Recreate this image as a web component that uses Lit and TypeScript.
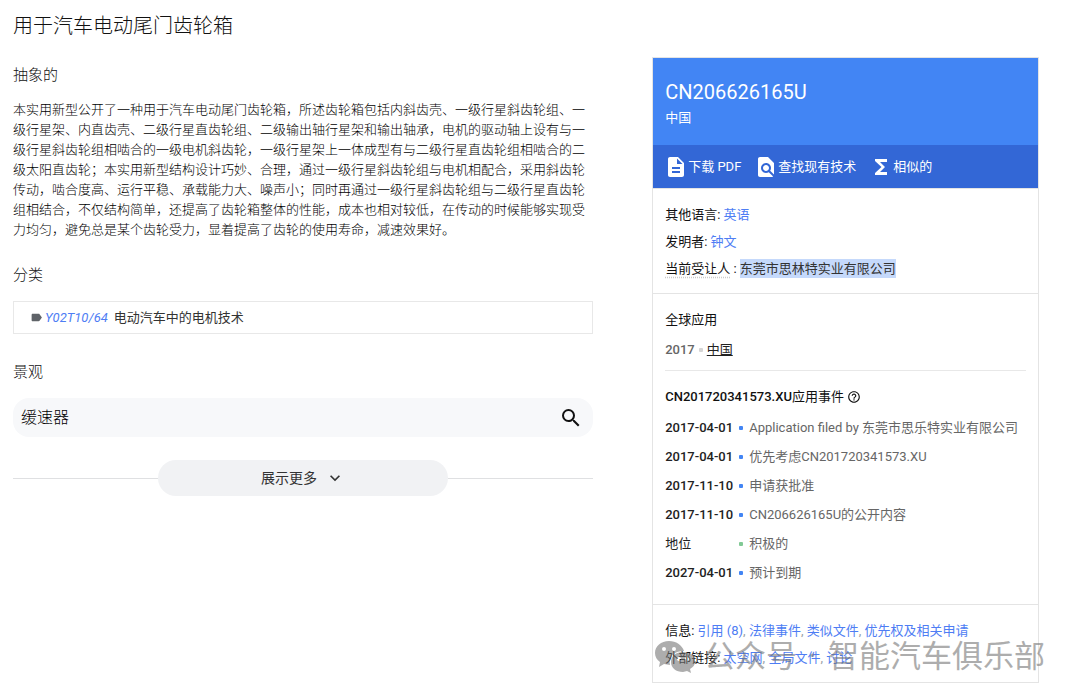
import { LitElement, html, css, svg } from "lit";
import { customElement, property } from "lit/decorators.js";

interface TimelineEvent {
  date: string;
  text: string;
  status?: boolean;
}

const EVENTS: TimelineEvent[] = [
  { date: "2017-04-01", text: "Application filed by 东莞市思乐特实业有限公司" },
  { date: "2017-04-01", text: "优先考虑CN201720341573.XU" },
  { date: "2017-11-10", text: "申请获批准" },
  { date: "2017-11-10", text: "CN206626165U的公开内容" },
  { date: "地位", text: "积极的", status: true },
  { date: "2027-04-01", text: "预计到期" },
];

const INFO_LINKS = ["引用 (8)", "法律事件", "类似文件", "优先权及相关申请"];
const EXTERNAL_LINKS = ["太空网", "全局文件", "讨论"];

const ICONS: Record<string, ReturnType<typeof svg>> = {
  document: svg`<path d="M14 2H6c-1.100 0-1.990.9-1.990 2L4 20c0 1.100.89 2 1.990 2H18c1.100 0 2-.9 2-2V8l-6-6zm2 16H8v-2h8v2zm0-4H8v-2h8v2zm-3-5V3.500L18.500 9H13z"/>`,
  find: svg`<path d="M20 19.590V8l-6-6H6c-1.100 0-1.990.9-1.990 2L4 20c0 1.100.89 2 1.990 2H18c.45 0 .85-.15 1.190-.4l-4.430-4.430c-.8.520-1.740.830-2.760.830-2.760 0-5-2.240-5-5s2.240-5 5-5 5 2.240 5 5c0 1.020-.31 1.960-.83 2.750L20 19.590zM9 13c0 1.660 1.340 3 3 3s3-1.340 3-3-1.340-3-3-3-3 1.340-3 3z"/>`,
  sigma: svg`<path d="M18 4H6v2l6.500 6L6 18v2h12v-3h-7l5-5-5-5h7z"/>`,
  search: svg`<path d="M15.500 14h-.79l-.28-.27A6.471 6.471 0 0 0 16 9.500 6.500 6.500 0 1 0 9.500 16c1.610 0 3.090-.59 4.230-1.570l.27.28v.79l5 4.990L20.490 19l-4.990-5zm-6 0C7.010 14 5 11.990 5 9.500S7.010 5 9.500 5 14 7.010 14 9.500 11.990 14 9.500 14z"/>`,
  chevron: svg`<path d="M16.590 8.590L12 13.170 7.410 8.590 6 10l6 6 6-6z"/>`,
  label: svg`<path d="M17.630 5.840C17.270 5.330 16.670 5 16 5L5 5.010C3.900 5.010 3 5.900 3 7v10c0 1.100.9 1.990 2 1.990L16 19c.67 0 1.270-.33 1.630-.84L22 12l-4.370-6.160z"/>`,
  help: svg`<path d="M11 18h2v-2h-2v2zm1-16C6.480 2 2 6.480 2 12s4.480 10 10 10 10-4.480 10-10S17.520 2 12 2zm0 18c-4.410 0-8-3.590-8-8s3.590-8 8-8 8 3.590 8 8-3.590 8-8 8zm0-14c-2.210 0-4 1.790-4 4h2c0-1.100.9-2 2-2s2 .9 2 2c0 2-3 1.750-3 5h2c0-2.250 3-2.500 3-5 0-2.210-1.790-4-4-4z"/>`,
};

@customElement("patent-icon")
class PatentIcon extends LitElement {
  @property() name = "";

  static styles = css`
    :host {
      display: inline-flex;
      flex: none;
      width: 24px;
      height: 24px;
    }
    svg {
      width: 100%;
      height: 100%;
      fill: currentColor;
    }
  `;

  render() {
    return html`<svg viewBox="0 0 24 24" aria-hidden="true">${ICONS[this.name]}</svg>`;
  }
}

@customElement("app-root")
class AppRoot extends LitElement {
  static styles = css`
    :host {
      display: block;
      color: #333;
      font: 13px/20px Roboto, "Noto Sans CJK SC", sans-serif;
    }
    * {
      box-sizing: border-box;
    }
    h1, h2, h3, p, ul {
      margin: 0;
      padding: 0;
      font-size: 13px;
      font-weight: 400;
    }
    a {
      color: #4e7df4;
      text-decoration: none;
    }
    .page {
      display: grid;
      grid-template-columns: minmax(0, 3fr) minmax(0, 2fr);
      column-gap: 59px;
      padding: 11px 41px 16px 13px;
      align-items: start;
    }
    .title {
      grid-column: 1 / -1;
      color: #111;
      font-size: 20px;
      font-weight: 300;
      line-height: 30px;
    }
    .main {
      padding-top: 23px;
    }
    .heading {
      color: #111;
      font-size: 15px;
      font-weight: 300;
      line-height: 22px;
    }
    .abstract {
      margin: 14px 0 24px;
      font-weight: 300;
      color: #000;
    }
    .classes {
      display: flex;
      align-items: center;
      height: 33px;
      margin: 15px 0 27px;
      padding: 0 16px;
      border: 1px solid #e8e8e8;
    }
    .tag {
      width: 13px;
      height: 13px;
      margin-right: 2px;
      color: #5f6368;
    }
    .code {
      margin-right: 6px;
      font-style: italic;
    }
    .search {
      display: flex;
      align-items: center;
      height: 39px;
      margin: 15px 0 23px;
      padding: 0 10px 0 8px;
      border-radius: 16px;
      background: #f7f8fa;
    }
    .field {
      flex: 1;
      min-width: 0;
      padding: 0;
      border: 0;
      outline: 0;
      background: none;
      color: #000;
      font: 300 16px/24px Roboto, "Noto Sans CJK SC", sans-serif;
    }
    .plain {
      display: flex;
      padding: 0;
      border: 0;
      background: none;
      color: #111;
    }
    .more {
      display: flex;
      align-items: center;
    }
    .more::before,
    .more::after {
      content: "";
      flex: 1;
      height: 1px;
      background: #dfe0e2;
    }
    .expand {
      display: flex;
      align-items: center;
      justify-content: center;
      gap: 8px;
      width: 50%;
      height: 36px;
      border: 0;
      border-radius: 18px;
      background: #f1f2f4;
      color: #333;
      font: 14px/20px Roboto, "Noto Sans CJK SC", sans-serif;
    }
    .small {
      width: 20px;
      height: 20px;
    }
    .side {
      position: relative;
      margin-top: 16px;
      border: 1px solid #e4e4e4;
    }
    .hero {
      padding: 21px 12px 17px;
      background: #4285f4;
      color: #fff;
    }
    .number {
      margin-bottom: 3px;
      font-size: 20px;
      line-height: 26px;
    }
    .bar {
      display: flex;
      align-items: center;
      gap: 13px;
      height: 43px;
      padding: 0 11px;
      background: #3367d6;
    }
    .action {
      display: flex;
      align-items: center;
      color: #fff;
    }
    .section {
      padding: 12px 12px 11px;
      border-top: 1px solid #e4e4e4;
      color: #111;
    }
    .timeline {
      padding: 16px 12px 17px;
    }
    .row {
      line-height: 27px;
    }
    .selected {
      padding: 2px 0;
      background: #c5d9fb;
      color: #333;
    }
    .hint {
      text-decoration: underline dotted #ccc;
      text-underline-offset: 4px;
    }
    .muted {
      color: #9aa0a6;
    }
    .year {
      display: flex;
      align-items: center;
      gap: 4px;
      margin-top: 10px;
      padding-bottom: 10px;
      border-bottom: 1px solid #e8e8e8;
      color: #666;
      font-weight: 500;
    }
    .dot {
      flex: none;
      width: 4px;
      height: 4px;
      border-radius: 1px;
      background: #d5d5d5;
    }
    .country {
      color: #222;
      font-weight: 400;
      text-decoration: underline;
    }
    .events-title {
      display: flex;
      align-items: center;
      gap: 3px;
      margin: 16px 0 6px;
      font-weight: 500;
    }
    .cjk {
      font-weight: 400;
    }
    .help {
      width: 14px;
      height: 14px;
    }
    .event {
      display: grid;
      grid-template-columns: 74px 4px 1fr;
      align-items: center;
      height: 29px;
    }
    .date {
      color: #222;
      font-weight: 500;
    }
    .date.cjk {
      font-weight: 400;
    }
    .blue {
      background: #4285f4;
    }
    .green {
      background: #81c995;
    }
    .desc {
      padding-left: 6px;
      color: #666;
      white-space: nowrap;
    }
    .watermark {
      position: absolute;
      right: -7px;
      bottom: 5px;
      display: flex;
      align-items: center;
      color: #777;
      opacity: 0.6;
      font-size: 31px;
      line-height: 40px;
      white-space: nowrap;
      pointer-events: none;
    }
    .wechat {
      width: 42px;
      height: 34px;
      margin-right: 8px;
    }
    .sep {
      width: 31px;
      text-align: center;
    }
  `;

  private links(items: string[]) {
    return items.map(
      (item, i) => html`${i ? html`<span class="muted">, </span>` : ""}<a href="#">${item}</a>`
    );
  }

  render() {
    return html`
      <div class="page">
        <h1 class="title">用于汽车电动尾门齿轮箱</h1>
        <main class="main">
          <h2 class="heading">抽象的</h2>
          <p class="abstract">本实用新型公开了一种用于汽车电动尾门齿轮箱，所述齿轮箱包括内斜齿壳、一级行星斜齿轮组、一级行星架、内直齿壳、二级行星直齿轮组、二级输出轴行星架和输出轴承，电机的驱动轴上设有与一级行星斜齿轮组相啮合的一级电机斜齿轮，一级行星架上一体成型有与二级行星直齿轮组相啮合的二级太阳直齿轮；本实用新型结构设计巧妙、合理，通过一级行星斜齿轮组与电机相配合，采用斜齿轮传动，啮合度高、运行平稳、承载能力大、噪声小；同时再通过一级行星斜齿轮组与二级行星直齿轮组相结合，不仅结构简单，还提高了齿轮箱整体的性能，成本也相对较低，在传动的时候能够实现受力均匀，避免总是某个齿轮受力，显着提高了齿轮的使用寿命，减速效果好。</p>
          <h2 class="heading">分类</h2>
          <div class="classes">
            <patent-icon class="tag" name="label"></patent-icon>
            <a class="code" href="#">Y02T10/64</a>
            <span>电动汽车中的电机技术</span>
          </div>
          <h2 class="heading">景观</h2>
          <div class="search">
            <input class="field" type="text" aria-label="景观" .value=${"缓速器"} />
            <button class="plain" type="button" aria-label="搜索">
              <patent-icon name="search"></patent-icon>
            </button>
          </div>
          <div class="more">
            <button class="expand" type="button">
              展示更多<patent-icon class="small" name="chevron"></patent-icon>
            </button>
          </div>
        </main>

        <aside class="side">
          <header class="hero">
            <h2 class="number">CN206626165U</h2>
            <p>中国</p>
          </header>
          <nav class="bar">
            <a class="action" href="#"><patent-icon name="document"></patent-icon>下载 PDF</a>
            <a class="action" href="#"><patent-icon name="find"></patent-icon>查找现有技术</a>
            <a class="action" href="#"><patent-icon name="sigma"></patent-icon>相似的</a>
          </nav>
          <section class="section">
            <p class="row">其他语言: <a href="#">英语</a></p>
            <p class="row">发明者: <a href="#">钟文</a></p>
            <p class="row"><span class="hint">当前受让人</span> : <span class="selected">东莞市思林特实业有限公司</span></p>
          </section>
          <section class="section timeline">
            <h3>全球应用</h3>
            <div class="year">
              2017<span class="dot"></span><a class="country" href="#">中国</a>
            </div>
            <h3 class="events-title">
              <span>CN201720341573.XU<span class="cjk">应用事件</span></span>
              <patent-icon class="help" name="help"></patent-icon>
            </h3>
            ${EVENTS.map(
              (e) => html`<div class="event">
                <span class="date ${e.status ? "cjk" : ""}">${e.date}</span>
                <span class="dot ${e.status ? "green" : "blue"}"></span>
                <span class="desc">${e.text}</span>
              </div>`
            )}
          </section>
          <section class="section">
            <p class="row">信息: ${this.links(INFO_LINKS)}</p>
            <p class="row">外部链接: ${this.links(EXTERNAL_LINKS)}</p>
          </section>
          <div class="watermark">
            <svg class="wechat" viewBox="0 0 42 34" fill="currentColor" aria-hidden="true">
              <path fill-rule="evenodd" d="M15 1C7 1 1 6 1 13c0 4 2 7 5 9l-1 5 5-3 6 1c-2-8 4-14 14-14C28 5 22 1 15 1zM10 7a2 2 0 1 1 0 4 2 2 0 0 1 0-4zm10 0a2 2 0 1 1 0 4 2 2 0 0 1 0-4z"/>
              <path fill-rule="evenodd" d="M29 12c-7 0-12 4-12 10s5 10 12 10l4-1 4 2-1-4c3-2 5-4 5-7 0-6-5-10-12-10zm-4 5a2 2 0 1 1 0 4 2 2 0 0 1 0-4zm8 0a2 2 0 1 1 0 4 2 2 0 0 1 0-4z"/>
            </svg>
            <span>公众号</span><span class="sep">·</span><span>智能汽车俱乐部</span>
          </div>
        </aside>
      </div>
    `;
  }
}
